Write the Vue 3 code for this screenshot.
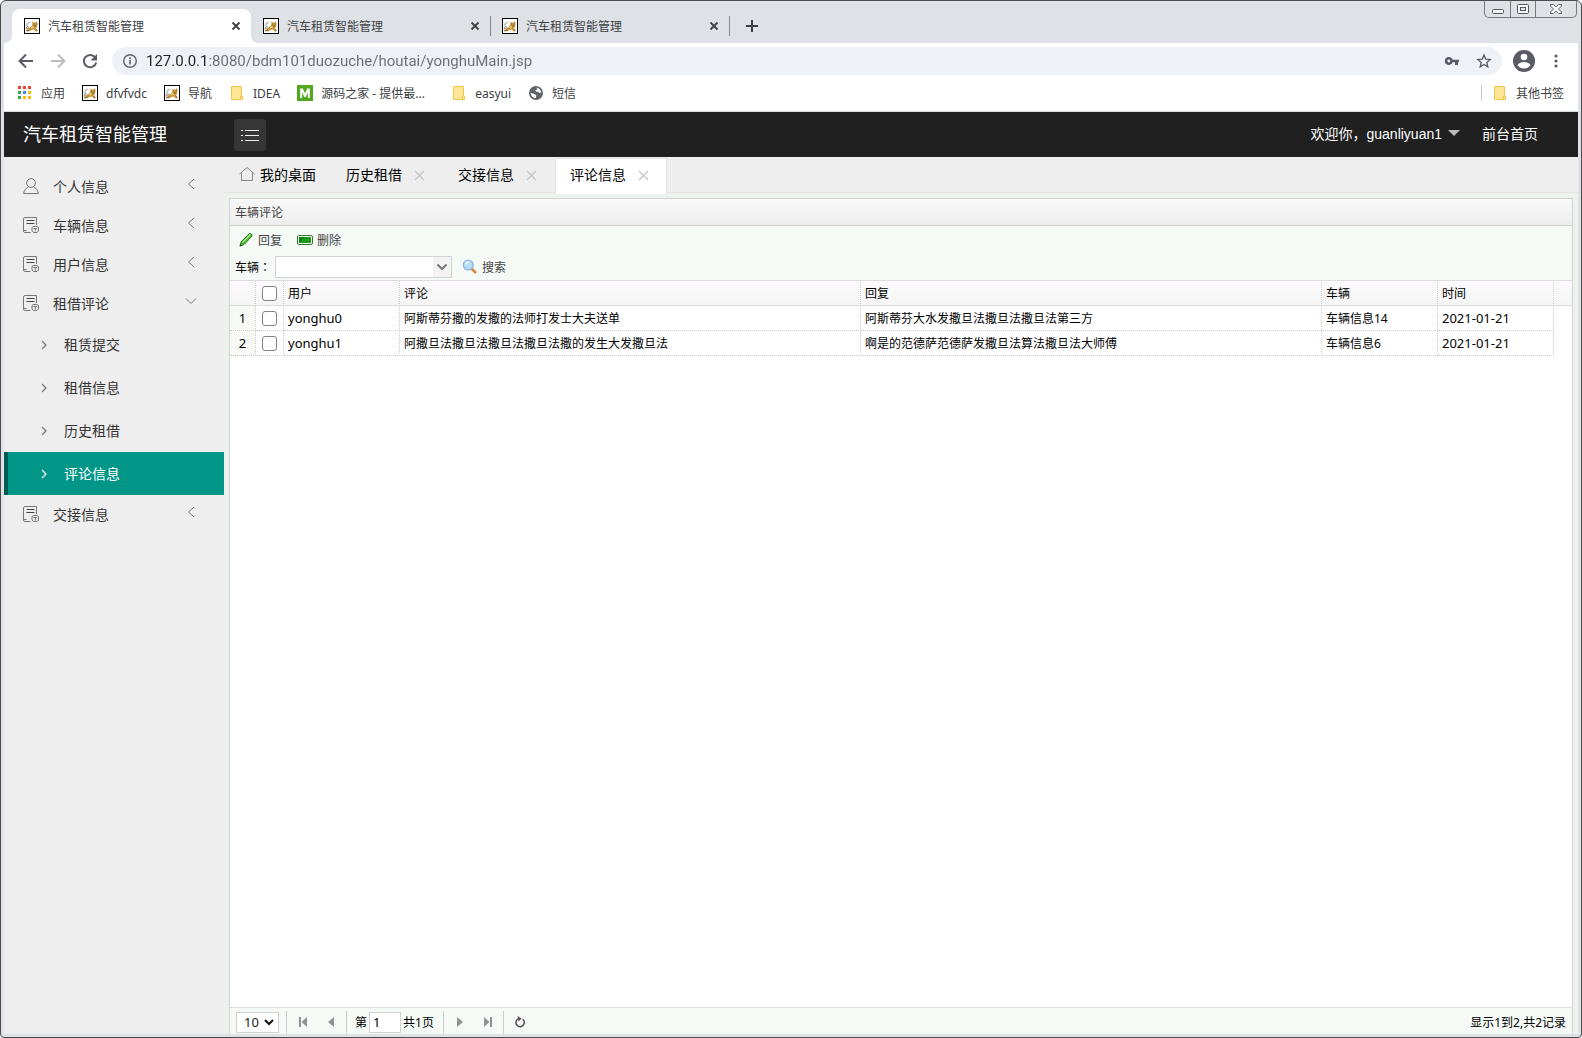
<script setup>
import { ref } from 'vue'

const browserTabs = ref([
  { title: '汽车租赁智能管理', active: true },
  { title: '汽车租赁智能管理', active: false },
  { title: '汽车租赁智能管理', active: false },
])

const bookmarks = [
  { icon: 'apps', label: '应用' },
  { icon: 'cat', label: 'dfvfvdc' },
  { icon: 'cat', label: '导航' },
  { icon: 'folder', label: 'IDEA' },
  { icon: 'm', label: '源码之家 - 提供最...', wide: true },
  { icon: 'folder', label: 'easyui' },
  { icon: 'globe', label: '短信' },
]

const appDots = ['#ea4335', '#ea4335', '#ea4335', '#34a853', '#4285f4', '#fbbc05', '#34a853', '#fbbc05', '#fbbc05']

const menu = ref([
  { label: '个人信息', icon: 'user' },
  { label: '车辆信息', icon: 'doc' },
  { label: '用户信息', icon: 'doc' },
  {
    label: '租借评论',
    icon: 'doc',
    open: true,
    children: [
      { label: '租赁提交' },
      { label: '租借信息' },
      { label: '历史租借' },
      { label: '评论信息', active: true },
    ],
  },
  { label: '交接信息', icon: 'doc' },
])

const pageTabs = ref([
  { label: '历史租借' },
  { label: '交接信息' },
  { label: '评论信息', active: true },
])

const url = ref('127.0.0.1:8080/bdm101duozuche/houtai/yonghuMain.jsp')

const rows = ref([
  { user: 'yonghu0', comment: '阿斯蒂芬撒的发撒的法师打发士大夫送单', reply: '阿斯蒂芬大水发撒旦法撒旦法撒旦法第三方', car: '车辆信息14', time: '2021-01-21', checked: false },
  { user: 'yonghu1', comment: '阿撒旦法撒旦法撒旦法撒旦法撒的发生大发撒旦法', reply: '啊是的范德萨范德萨发撒旦法算法撒旦法大师傅', car: '车辆信息6', time: '2021-01-21', checked: false },
])

const page = ref('1')
const pageSize = ref('10')
const car = ref('')
</script>

<template>
  <svg class="sprite" aria-hidden="true">
    <symbol id="cat" viewBox="0 0 16 16">
      <rect x="0.5" y="0.5" width="15" height="15" fill="#fff" stroke="#000" />
      <path d="M2 13l1.500-2 2-1.500 2-1.500 1-2-.5-2.500 1.500 1h2l1.500-1.500.5 3-.5 3-1 1.500 1.500 3h-2l-1.500-2-2.500.5-2.500 1.500z" fill="#c9973f" />
      <path d="M1.500 8l1-3 2.500-1.500 2 1-2 1-1.500 2z" fill="#c9c9c4" />
      <path d="M2 9l1.500 1M3 8l2 1.500M1.500 11l2-.5M2 13l3.500-1M12 11l1.500 2" fill="none" stroke="#6d6250" stroke-width="0.800" />
      <path d="M9 6h1M12 6h1M10 8l2-.3" stroke="#6b4c1c" stroke-width="0.800" />
      <path d="M7 9l2-.8 1 1.300-2.500.8z" fill="#f1d59a" />
    </symbol>
    <symbol id="folder" viewBox="0 0 16 16">
      <path d="M2.500 1.500h10v9.500h1v3.500h-11z" fill="#ffe694" stroke="#efc54b" />
      <path d="M11.500 14v-3h1" fill="none" stroke="#efc54b" />
    </symbol>
    <symbol id="m" viewBox="0 0 16 16">
      <rect width="16" height="16" fill="#54a820" />
      <path d="M3.200 13V3.500h2.600L8 8.500l2.200-5h2.600V13h-1.900V7.200L8.700 12H7.300L5.100 7.200V13z" fill="#fff" />
    </symbol>
    <symbol id="globe" viewBox="0 0 16 16">
      <circle cx="8" cy="8" r="7" fill="#5f6368" />
      <path d="M8.500 2.600C11 3 13 5 13.400 7.500l-2 .4-1.200-1.200H8.400L7.200 5.400l2-1zM2.600 8l3.400.8 2.400 1.600-.8 2.800C5 13.100 2.800 11 2.600 8z" fill="#fff" />
    </symbol>
    <symbol id="user" viewBox="0 0 16 16">
      <circle cx="8" cy="5" r="4.400" />
      <path d="M5.600 8.800C3 10 1 12.500 .6 15.500h14.800C15 12.500 13 10 10.400 8.800" />
    </symbol>
    <symbol id="doc" viewBox="0 0 16 16">
      <path d="M13.500 8v-7.500H2a1.500 1.500 0 0 0-1.500 1.500v12a1.500 1.500 0 0 0 1.500 1.500h5.500M.5 13.500h3" />
      <path d="M3.500 3.500h8M3.500 6.500h8" stroke="#444" />
      <path d="M9 10.500l1.500-1h3.500l1.500 1v3.500l-1.500 1.500h-3.500L9 14zM10.500 11.500h3.500M12.300 11v3.500" />
    </symbol>
  </svg>

  <div class="window">
    <header class="strip">
      <div class="tabs">
        <div v-for="(t, i) in browserTabs" :key="i" class="btab" :class="{ on: t.active }">
          <svg class="i16"><use href="#cat" /></svg>
          <span>{{ t.title }}</span>
          <button class="x" aria-label="关闭标签页">
            <svg width="10" height="10" viewBox="0 0 10 10"><path d="M1.500 1.500l7 7M8.500 1.500l-7 7" stroke="#3c4043" stroke-width="1.800" /></svg>
          </button>
        </div>
        <button class="plus" aria-label="新标签页">
          <svg width="12" height="12" viewBox="0 0 12 12"><path d="M6 0v12M0 6h12" stroke="#3c4043" stroke-width="2" /></svg>
        </button>
      </div>
      <div class="winbtns">
        <button aria-label="最小化"><svg width="14" height="12" viewBox="0 0 14 12"><rect x="1.500" y="6.500" width="11" height="4" rx="1" fill="#f4f5f7" stroke="#555a60" /></svg></button>
        <button aria-label="最大化"><svg width="14" height="12" viewBox="0 0 14 12"><rect x="1.500" y="1.500" width="11" height="9" rx="1" fill="#f4f5f7" stroke="#555a60" /><rect x="4.500" y="4.500" width="5" height="3" fill="#dee1e6" stroke="#555a60" /></svg></button>
        <button class="wide" aria-label="关闭"><svg width="14" height="12" viewBox="0 0 14 12"><path d="M1.500 1.500h3l2.500 2.500 2.500-2.500h3v1.500L9.500 6l3 3v1.500h-3L7 8l-2.500 2.500h-3V9l3-3-3-3z" fill="#f4f5f7" stroke="#555a60" stroke-width=".9" /></svg></button>
      </div>
    </header>

    <div class="toolbar">
      <button aria-label="后退"><svg width="16" height="16" viewBox="0 0 16 16"><path d="M15 8H2M8 1.500L1.600 8 8 14.500" fill="none" stroke="#5a5b66" stroke-width="2" /></svg></button>
      <button aria-label="前进"><svg width="16" height="16" viewBox="0 0 16 16"><path d="M1 8h13M8 1.500L14.400 8 8 14.500" fill="none" stroke="#bcbdc1" stroke-width="2" /></svg></button>
      <button aria-label="刷新"><svg width="16" height="16" viewBox="0 0 16 16"><path d="M13 4.200A6.200 6.200 0 1 0 14.200 9.500" fill="none" stroke="#5a5b66" stroke-width="2" /><path d="M15 1v6.500H8.500z" fill="#5a5b66" /></svg></button>
      <div class="omni">
        <svg width="16" height="16" viewBox="0 0 16 16"><circle cx="8" cy="8" r="6.300" fill="none" stroke="#5f6368" stroke-width="1.400" /><path d="M8 7v4.500M8 4.300v1.600" stroke="#5f6368" stroke-width="1.600" /></svg>
        <input v-model="url" class="url" type="text" aria-label="地址" />
        <svg width="16" height="16" viewBox="0 0 16 16"><path d="M4.800 4a4 4 0 1 0 3.800 5.200H11V12h3V9.200h1V6.800H8.600A4 4 0 0 0 4.800 4zm0 2.600a1.400 1.400 0 1 1 0 2.800 1.400 1.400 0 0 1 0-2.800z" fill="#5a5b66" /></svg>
        <svg width="16" height="16" viewBox="0 0 16 16"><path d="M8 2l1.700 4.100 4.500.4-3.400 2.900 1 4.400L8 11.500l-3.800 2.300 1-4.400L1.800 6.500l4.500-.4z" fill="none" stroke="#5a5b66" stroke-width="1.300" /></svg>
      </div>
      <button class="avatar" aria-label="用户"><svg width="22" height="22" viewBox="0 0 22 22"><circle cx="11" cy="11" r="11" fill="#5a5b66" /><circle cx="11" cy="7" r="3.300" fill="#fff" /><path d="M4.500 15c1.500-2.300 4-3 6.500-3s5 .7 6.500 3c-1.500 2.300-4 3.600-6.500 3.600S6 17.300 4.500 15z" fill="#fff" /></svg></button>
      <button class="more" aria-label="菜单"><svg width="4" height="14" viewBox="0 0 4 14"><g fill="#5a5b66"><circle cx="2" cy="2" r="1.600" /><circle cx="2" cy="7" r="1.600" /><circle cx="2" cy="12" r="1.600" /></g></svg></button>
    </div>

    <nav class="marks">
      <a v-for="(b, i) in bookmarks" :key="i" href="#" :class="{ long: b.wide }">
        <svg v-if="b.icon === 'apps'" class="i16" viewBox="0 0 16 16">
          <rect v-for="(c, n) in appDots" :key="n" :x="1 + (n % 3) * 5" :y="1 + Math.floor(n / 3) * 5" width="3" height="3" :fill="c" />
        </svg>
        <svg v-else class="i16"><use :href="'#' + b.icon" /></svg>
        <span>{{ b.label }}</span>
      </a>
      <a href="#" class="others"><svg class="i16"><use href="#folder" /></svg><span>其他书签</span></a>
    </nav>

    <div class="top">
      <h1>汽车租赁智能管理</h1>
      <button class="burger" aria-label="收起菜单">
        <svg width="18" height="12" viewBox="0 0 18 12"><path d="M4 1.500h14M4 6.500h14M4 11.500h14M0 1.500h2M0 6.500h2M0 11.500h2" stroke="#eee" stroke-width="1" /></svg>
      </button>
      <a href="#" class="hello">欢迎你，guanliyuan1<i></i></a>
      <a href="#">前台首页</a>
    </div>

    <div class="body">
      <aside>
        <template v-for="m in menu" :key="m.label">
          <a href="#" class="item">
            <svg class="i16 line"><use :href="'#' + m.icon" /></svg>
            <span>{{ m.label }}</span>
            <svg class="arr" width="12" height="12" viewBox="0 0 12 12"><path :d="m.open ? 'M1 3.500l5 5 5-5' : 'M9 1L3.500 6 9 11'" fill="none" stroke="#777" /></svg>
          </a>
          <a v-for="c in m.children" :key="c.label" href="#" class="sub" :class="{ on: c.active }">
            <svg width="6" height="10" viewBox="0 0 6 10"><path d="M1 1l4 4-4 4" fill="none" stroke="currentColor" stroke-width="1.200" /></svg>
            <span>{{ c.label }}</span>
          </a>
        </template>
      </aside>

      <main>
        <nav class="ptabs">
          <a href="#" class="home">
            <svg width="16" height="16" viewBox="0 0 16 16"><path d="M.5 8L8 1.500 15.500 8M2.500 6.500v8h11v-8" fill="none" stroke="#888" /></svg>我的桌面
          </a>
          <div v-for="t in pageTabs" :key="t.label" class="ptab" :class="{ on: t.active }">
            <a href="#">{{ t.label }}</a>
            <button aria-label="关闭"><svg width="11" height="11" viewBox="0 0 11 11"><path d="M1 1l9 9M10 1l-9 9" stroke="#c4c4c8" stroke-width="1.200" /></svg></button>
          </div>
        </nav>

        <section class="panel">
          <h2>车辆评论</h2>
          <div class="tools">
            <div class="row">
              <button class="tool">
                <svg class="i16" viewBox="0 0 16 16"><path d="M2 14l1.200-4.200L11.500 1.600c1-.8 3.200 1 2.500 2.300L6 12.600z" fill="#48b32c" stroke="#1f7a1a" /><path d="M4.500 10.500l8-8" stroke="#b6eb8e" stroke-width="1.400" /><path d="M1.500 14.500l1-2.500 1.500 1.500z" fill="#234d1f" /></svg>回复
              </button>
              <button class="tool">
                <svg class="i16" viewBox="0 0 16 16"><rect x=".5" y="3.500" width="15" height="9" rx="1.500" fill="#fff" stroke="#2c7a2c" /><rect x="2" y="5" width="12" height="6" fill="#1c9a1c" /><path d="M2 11V5h6z" fill="#0a840a" /></svg>删除
              </button>
            </div>
            <div class="row">
              <label for="car">车辆<span class="colon">：</span></label>
              <div class="combo">
                <select id="car" v-model="car"><option value=""></option></select>
                <span><svg width="12" height="8" viewBox="0 0 12 8"><path d="M1.500 1.500L6 6l4.500-4.500" fill="none" stroke="#777" stroke-width="2" /></svg></span>
              </div>
              <button class="tool">
                <svg class="i16" viewBox="0 0 16 16"><path d="M9.500 9.500l4.500 4.500" stroke="#d98b3a" stroke-width="2.600" /><circle cx="6.300" cy="6" r="4.900" fill="#b5dcfb" stroke="#8fb4de" stroke-width="1.400" /><path d="M3.500 5.500c.5-2 2-2.500 3.500-2.500" fill="none" stroke="#fff" stroke-width="1.400" /></svg>搜索
              </button>
            </div>
          </div>

          <div class="gridwrap">
            <table>
              <colgroup>
                <col class="c-no" /><col class="c-ck" /><col class="c-s" /><col /><col /><col class="c-s" /><col class="c-s" /><col class="c-end" />
              </colgroup>
              <thead>
                <tr>
                  <th></th>
                  <th class="ck"><input type="checkbox" aria-label="全选" /></th>
                  <th>用户</th><th>评论</th><th>回复</th><th>车辆</th><th>时间</th><th class="end"></th>
                </tr>
              </thead>
              <tbody>
                <tr v-for="(r, i) in rows" :key="r.user">
                  <td class="latin no">{{ i + 1 }}</td>
                  <td class="ck"><input v-model="r.checked" type="checkbox" :aria-label="r.user" /></td>
                  <td class="latin">{{ r.user }}</td>
                  <td>{{ r.comment }}</td>
                  <td>{{ r.reply }}</td>
                  <td>{{ r.car }}</td>
                  <td class="latin">{{ r.time }}</td>
                  <td class="end"></td>
                </tr>
              </tbody>
            </table>
          </div>

          <footer>
            <div class="size">
              <select v-model="pageSize" aria-label="每页条数"><option>10</option><option>20</option></select>
              <svg width="10" height="7" viewBox="0 0 10 7"><path d="M1 1l4 4 4-4" fill="none" stroke="#111" stroke-width="2" /></svg>
            </div>
            <div class="grp">
              <button aria-label="首页"><svg width="10" height="10" viewBox="0 0 10 10"><path d="M1 0h2v10H1zM9 0v10L3.500 5z" fill="#8f948f" /></svg></button>
              <button aria-label="上一页"><svg width="10" height="10" viewBox="0 0 10 10"><path d="M8 0v10L2 5z" fill="#8f948f" /></svg></button>
            </div>
            <div class="grp num"><label for="pg">第</label><input id="pg" v-model="page" type="text" /><span>共1页</span></div>
            <div class="grp">
              <button aria-label="下一页"><svg width="10" height="10" viewBox="0 0 10 10"><path d="M2 0v10l6-5z" fill="#8f948f" /></svg></button>
              <button aria-label="末页"><svg width="10" height="10" viewBox="0 0 10 10"><path d="M7 0h2v10H7zM1 0v10l5.500-5z" fill="#8f948f" /></svg></button>
            </div>
            <div class="grp">
              <button aria-label="刷新"><svg width="12" height="12" viewBox="0 0 12 12"><path d="M4 2.800a4.200 4.200 0 1 0 4.500.2" fill="none" stroke="#554c48" stroke-width="1.500" /><path d="M3.500 0l4 2.500L4.500 5.500z" fill="#554c48" /></svg></button>
            </div>
            <p>显示1到2,共2记录</p>
          </footer>
        </section>
      </main>
    </div>
  </div>
</template>

<style>
body {
  margin: 0;
  background: #fff;
}
</style>

<style scoped>
* {
  box-sizing: border-box;
}
.sprite {
  position: absolute;
  width: 0;
  height: 0;
}
button {
  display: flex;
  align-items: center;
  justify-content: center;
  margin: 0;
  padding: 0;
  border: 0;
  background: none;
  font: inherit;
  color: inherit;
}
a {
  color: inherit;
  text-decoration: none;
}
svg {
  flex: none;
  display: block;
}
.i16 {
  width: 16px;
  height: 16px;
}
.line {
  fill: none;
  stroke: #777;
}
.window {
  display: flex;
  flex-direction: column;
  min-height: 100vh;
  padding: 0 3px 3px;
  border: 1px solid #4c4b50;
  border-radius: 6px 6px 4px 4px;
  background: #dee1e6;
  font-family: 'Noto Sans', 'Noto Sans CJK SC', sans-serif;
  font-size: 12px;
  color: #000;
}

/* browser chrome */
.strip {
  display: flex;
  justify-content: space-between;
  align-items: flex-start;
  height: 42px;
  color: #3c4043;
}
.tabs {
  display: flex;
  align-items: center;
  padding: 8px 0 0 8px;
}
.btab {
  display: flex;
  align-items: center;
  gap: 8px;
  position: relative;
  width: 239px;
  height: 34px;
  padding: 0 7px 0 12px;
}
.btab.on {
  background: #fff;
  border-radius: 8px 8px 0 0;
}
.btab.on::before,
.btab.on::after {
  content: '';
  position: absolute;
  bottom: 0;
  width: 8px;
  height: 8px;
}
.btab.on::before {
  left: -8px;
  background: radial-gradient(circle at 0 0, transparent 8px, #fff 8px);
}
.btab.on::after {
  right: -8px;
  background: radial-gradient(circle at 100% 0, transparent 8px, #fff 8px);
}
.btab:not(.on)::after {
  content: '';
  position: absolute;
  right: -1px;
  top: 7px;
  width: 1px;
  height: 20px;
  background: #85888d;
}
.btab span {
  flex: 1;
}
.x {
  width: 16px;
  height: 16px;
}
.plus {
  width: 28px;
  height: 28px;
  margin-left: 9px;
}
.winbtns {
  display: flex;
  height: 17px;
  margin-right: 1px;
  border: 1px solid #77797f;
  border-top: 0;
  border-radius: 0 0 5px 5px;
}
.winbtns button {
  width: 25px;
}
.winbtns button + button {
  border-left: 1px solid #77797f;
}
.winbtns .wide {
  width: 41px;
}
.toolbar {
  display: flex;
  align-items: center;
  height: 36px;
  padding: 0 12px 0 6px;
  background: #fff;
}
.toolbar > button {
  width: 32px;
  height: 32px;
}
.omni {
  flex: 1;
  display: flex;
  align-items: center;
  gap: 16px;
  height: 28px;
  margin-left: 6px;
  padding: 0 10px;
  border-radius: 14px;
  background: #eef1f6;
}
.url {
  flex: 1;
  min-width: 0;
  height: 28px;
  margin-left: -8px;
  padding: 0;
  border: 0;
  background: linear-gradient(90deg, #202124 63px, #6b6e74 63px);
  background-clip: text;
  -webkit-background-clip: text;
  color: transparent;
  caret-color: #202124;
  font-family: Roboto, 'Noto Sans CJK SC', sans-serif;
  font-size: 15px;
}
.toolbar > .avatar {
  width: 44px;
}
.toolbar > .more {
  width: 20px;
}
.marks {
  display: flex;
  align-items: center;
  gap: 17px;
  height: 33px;
  padding: 0 14px 4px 13px;
  border-bottom: 1px solid #d8d9dc;
  background: #fff;
  color: #3c4043;
}
.marks a {
  display: flex;
  align-items: center;
  gap: 8px;
  white-space: nowrap;
}
.marks .long {
  width: 137px;
}
.marks .others {
  margin-left: auto;
  padding-left: 10px;
  border-left: 1px solid #c6c8cc;
  height: 16px;
}

/* application */
.top {
  display: flex;
  align-items: center;
  height: 45px;
  padding: 0 40px 0 19px;
  background: #202020;
  color: #fff;
  font-family: 'Liberation Sans', 'Noto Sans CJK SC', sans-serif;
  font-size: 14px;
}
.top h1 {
  width: 211px;
  margin: 0;
  padding-bottom: 4px;
  font-size: 18px;
  font-weight: 400;
}
.top a {
  padding-bottom: 4px;
}
.burger {
  width: 32px;
  height: 32px;
  border-radius: 3px;
  background: #363636;
}
.hello {
  display: flex;
  align-items: center;
  gap: 6px;
  margin: 0 22px 0 auto;
}
.hello i {
  border: 6px solid transparent;
  border-top-color: #bbb;
  border-bottom: 0;
}
.body {
  flex: 1;
  display: flex;
  background: #eee;
}
aside {
  flex: none;
  width: 220px;
  padding-top: 10px;
  font-size: 14px;
  color: #333;
}
.item {
  display: flex;
  align-items: center;
  gap: 14px;
  height: 39px;
  padding: 0 27px 2px 19px;
}
.item .arr {
  margin: 0 0 4px auto;
}
.sub {
  display: flex;
  align-items: center;
  gap: 17px;
  height: 43px;
  padding-left: 33px;
  border-left: 4px solid transparent;
}
.sub span {
  padding-bottom: 2px;
}
.sub svg {
  color: #777;
}
.sub.on {
  border-color: #005b52;
  background: #009688;
  color: #fff;
}
.sub.on svg {
  color: #fff;
}
main {
  flex: 1;
  min-width: 0;
  display: flex;
  flex-direction: column;
  padding-right: 5px;
  background: #eef2ef;
}
.ptabs {
  display: flex;
  height: 36px;
  margin-right: -5px;
  padding-top: 1px;
  border-bottom: 1px solid #e4e4e4;
  background: #eee;
  font-size: 14px;
}
.home {
  display: flex;
  align-items: center;
  gap: 5px;
  width: 108px;
  padding: 0 0 2px 15px;
}
.ptab {
  display: flex;
  align-items: center;
  gap: 12px;
  width: 112px;
  height: 36px;
  padding: 0 0 2px 14px;
}
.ptab a {
  padding-bottom: 2px;
}
.ptab.on {
  margin-left: -1px;
  padding-bottom: 3px;
  border: 1px solid #e4e4e4;
  border-width: 1px 1px 0;
  background: #fff;
}
.panel {
  flex: 1;
  display: flex;
  flex-direction: column;
  margin: 5px 0 0 5px;
  border: 1px solid #d3d3d3;
  border-bottom: 0;
  background: #fff;
}
.panel h2 {
  height: 27px;
  margin: 0;
  padding-left: 5px;
  border-bottom: 1px solid #d3d3d3;
  background: linear-gradient(#f8f8f8, #eee);
  font-size: 12px;
  font-weight: 400;
  line-height: 28px;
  color: #444;
}
.tools {
  height: 55px;
  border-bottom: 1px solid #ddd;
  background: #f5faf7;
}
.row {
  display: flex;
  align-items: center;
  height: 27px;
  padding-left: 5px;
}
.tool {
  gap: 4px;
  height: 26px;
  padding: 0 4px 0 3px;
  color: #444;
}
.row .tool + .tool {
  margin-left: 8px;
}
.row label {
  width: 40px;
  white-space: nowrap;
}
.colon {
  font-family: 'Noto Sans CJK TC', sans-serif;
}
.combo {
  position: relative;
  width: 177px;
  height: 22px;
  margin-right: 7px;
}
.combo select {
  width: 100%;
  height: 100%;
  padding: 0 20px 0 4px;
  border: 1px solid #d3d3d3;
  border-radius: 0;
  background: #fff;
  appearance: none;
}
.combo span {
  position: absolute;
  top: 1px;
  right: 1px;
  display: flex;
  align-items: center;
  justify-content: center;
  width: 18px;
  height: 20px;
  background: #f3f3f3;
  pointer-events: none;
}
.gridwrap {
  flex: 1;
}
table {
  width: 100%;
  table-layout: fixed;
  border-collapse: separate;
  border-spacing: 0;
}
.c-no {
  width: 26px;
}
.c-ck {
  width: 28px;
}
.c-s {
  width: 116px;
}
.c-end {
  width: 18px;
}
th,
td {
  height: 25px;
  padding: 2px 4px 0;
  border: 0 dotted #ccc;
  border-width: 0 1px 1px 0;
  line-height: 22px;
  font-weight: 400;
  text-align: left;
  white-space: nowrap;
}
th {
  border-bottom: 1px solid #ddd;
  background: linear-gradient(#fcfafc, #f5f5f5);
}
.latin {
  padding-top: 0;
  line-height: 24px;
  font-size: 13px;
}
.no {
  background: #f7f9f7;
  text-align: center;
}
th.end {
  border-right: 0;
}
td.end {
  border: 0;
}
.ck {
  padding: 0;
}
.ck input {
  display: block;
  width: 15px;
  height: 15px;
  margin: 0 auto;
  border: 1px solid #828282;
  border-radius: 3px;
  background: #fff;
  appearance: none;
}
.ck input:checked {
  background: #1a73e8;
}
footer {
  display: flex;
  align-items: center;
  height: 27px;
  padding: 2px 6px 0;
  border-top: 1px solid #ddd;
  background: #f5faf7;
}
.size {
  position: relative;
  width: 43px;
  margin-right: 7px;
}
.size select {
  display: block;
  width: 43px;
  height: 21px;
  padding: 0 0 0 7px;
  border: 1px solid #d3d3d3;
  background: #fff;
  font: inherit;
  font-size: 13px;
  color: #222;
  appearance: none;
}
.size svg {
  position: absolute;
  right: 5px;
  top: 7px;
  pointer-events: none;
}
.grp {
  display: flex;
  align-items: center;
  height: 23px;
  padding: 0 1px 0 2px;
  border-left: 1px solid #ccc;
}
.grp button {
  width: 28px;
  height: 22px;
}
.num {
  gap: 2px;
  width: 97px;
  padding-left: 8px;
}
.num input {
  width: 32px;
  height: 21px;
  padding: 0 3px;
  border: 1px solid #d3d3d3;
  background: #fff;
  font: inherit;
  font-size: 13px;
}
.num label,
.num span {
  white-space: nowrap;
}
footer p {
  margin: 0 0 0 auto;
}
</style>
